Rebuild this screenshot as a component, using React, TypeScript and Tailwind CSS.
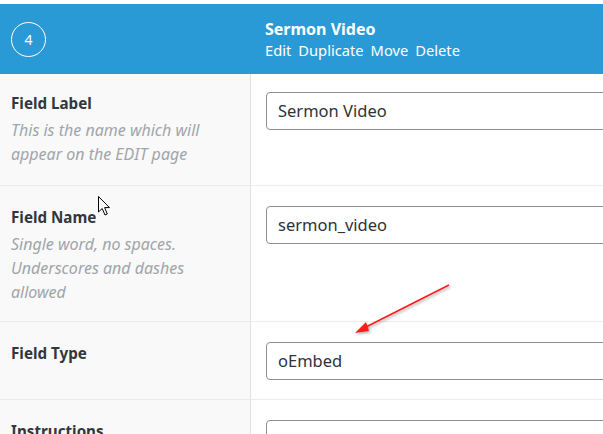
import React from "react";

const font = { fontFamily: '"Noto Sans", "Open Sans", sans-serif' };

type Row = {
  label: string;
  desc?: string[];
  value: string;
};

const rows: Row[] = [
  { label: "Field Label", desc: ["This is the name which will", "appear on the EDIT page"], value: "Sermon Video" },
  { label: "Field Name", desc: ["Single word, no spaces.", "Underscores and dashes", "allowed"], value: "sermon_video" },
  { label: "Field Type", value: "oEmbed" },
  { label: "Instructions", value: "" },
];

function FieldRow({ row, first }: { row: Row; first: boolean }) {
  return (
    <div className={`grid grid-cols-[251px_1fr] ${first ? "" : "border-t border-[#ececec]"}`}>
      <div className={`border-r border-[#e1e1e1] bg-[#f9f9f9] px-[11px] ${first ? "pt-[18px] pb-[19px]" : "pt-[20px] pb-[17px]"}`}>
        <div className="text-[15.2px] font-bold leading-[22px] text-[#32373c]">{row.label}</div>
        {row.desc && (
          <div className="mt-[4px] text-[16px] italic leading-[24px] text-[#a0a5aa]">
            {row.desc.map((d) => (
              <div key={d}>{d}</div>
            ))}
          </div>
        )}
      </div>
      <div className={`bg-white pl-[15px] pb-[19px] ${first ? "pt-[18px]" : "pt-[20px]"}`}>
        <div className="-mr-2 flex h-[38px] items-center rounded-[4px] border border-[#8c8f94] bg-white px-[11px] text-[16.5px] text-[#2c3338]">
          {row.value}
        </div>
      </div>
    </div>
  );
}

export default function App() {
  return (
    <div className="relative h-[434px] w-[603px] overflow-hidden bg-white pt-1" style={font}>
      <div className="grid h-[70px] grid-cols-[251px_1fr] bg-[#2a9ad6] text-white">
        <div className="flex items-center pl-[11px]">
          <div className="flex h-[35px] w-[35px] items-center justify-center rounded-full border border-white text-[14px]">
            4
          </div>
        </div>
        <div className="flex flex-col justify-center pl-[14px]">
          <div className="text-[16px] font-bold leading-[22px]">Sermon Video</div>
          <div className="flex gap-[7px] text-[14.7px] leading-[21px]">
            <span>Edit</span>
            <span>Duplicate</span>
            <span>Move</span>
            <span>Delete</span>
          </div>
        </div>
      </div>

      {rows.map((r, i) => (
        <FieldRow key={r.label} row={r} first={i === 0} />
      ))}

      {/* annotation arrow */}
      <svg className="pointer-events-none absolute left-0 top-0" width="603" height="434">
        <defs>
          <filter id="sh" x="-20%" y="-20%" width="140%" height="140%">
            <feDropShadow dx="1.5" dy="1.5" stdDeviation="1.2" floodColor="#000" floodOpacity="0.3" />
          </filter>
        </defs>
        <g filter="url(#sh)">
          <line x1="449" y1="285" x2="362" y2="329" stroke="#ff1a1a" strokeWidth="1.6" />
          <polygon points="355,333 366,322 369,331" fill="#ff1a1a" />
        </g>
      </svg>

      {/* mouse cursor */}
      <svg className="pointer-events-none absolute left-[98px] top-[196px]" width="14" height="21" viewBox="0 0 14 21">
        <path d="M0.5 0.5 L0.5 16 L4.2 12.5 L7 19 L9.3 18 L6.6 11.6 L11.5 11.6 Z" fill="#fff" stroke="#000" strokeWidth="1" strokeLinejoin="round" />
      </svg>
    </div>
  );
}
